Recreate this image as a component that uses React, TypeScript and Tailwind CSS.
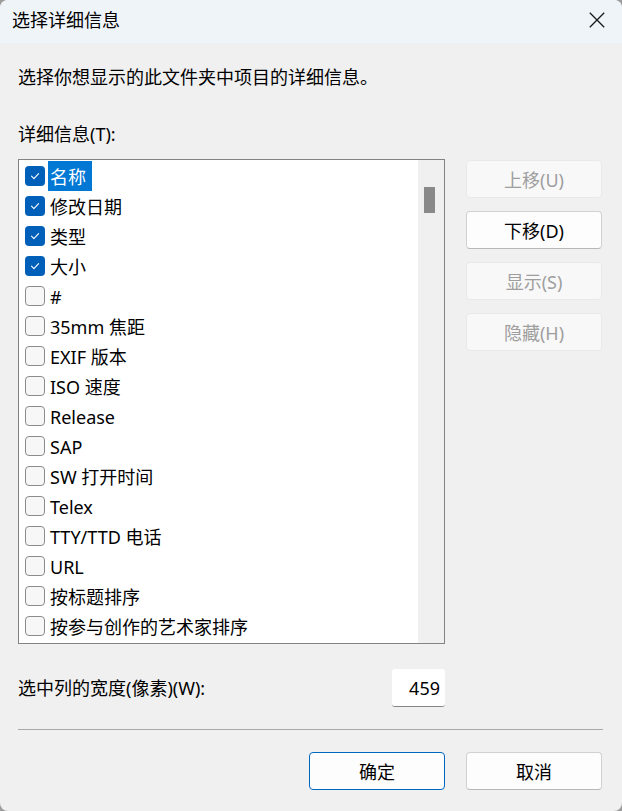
import React from "react";

const items: { label: string; checked: boolean; selected?: boolean }[] = [
  { label: "名称", checked: true, selected: true },
  { label: "修改日期", checked: true },
  { label: "类型", checked: true },
  { label: "大小", checked: true },
  { label: "#", checked: false },
  { label: "35mm 焦距", checked: false },
  { label: "EXIF 版本", checked: false },
  { label: "ISO 速度", checked: false },
  { label: "Release", checked: false },
  { label: "SAP", checked: false },
  { label: "SW 打开时间", checked: false },
  { label: "Telex", checked: false },
  { label: "TTY/TTD 电话", checked: false },
  { label: "URL", checked: false },
  { label: "按标题排序", checked: false },
  { label: "按参与创作的艺术家排序", checked: false },
];

function Check({ checked }: { checked: boolean }) {
  if (checked) {
    return (
      <div className="w-[20px] h-[20px] rounded-[4px] bg-[#005fb8] flex items-center justify-center shrink-0">
        <svg width="20" height="20" viewBox="0 0 20 20" fill="none">
          <path d="M6.5 10.2 L8.9 12.6 L13.6 7.6" stroke="#ffffff" strokeWidth="1.1" strokeLinecap="round" strokeLinejoin="round" />
        </svg>
      </div>
    );
  }
  return <div className="w-[20px] h-[20px] rounded-[4px] border border-[#8b8b8b] bg-[#f7f7f7] shrink-0" />;
}

function SideButton({ label, enabled }: { label: string; enabled?: boolean }) {
  return (
    <div
      className={
        enabled
          ? "h-[38px] w-[136px] rounded-[4px] border border-[#d1d1d1] border-b-[#b8b8b8] bg-[#fdfdfd] flex items-center justify-center pt-[2px] text-black"
          : "h-[38px] w-[136px] rounded-[4px] border border-[#e9e9e9] bg-[#f8f8f8] flex items-center justify-center pt-[2px] text-[#9e9e9e]"
      }
    >
      {label}
    </div>
  );
}

export default function App() {
  return (
    <div className="w-[622px] h-[811px] bg-[#9c9c9c]">
      <div
        className="w-full h-full rounded-[8px] overflow-hidden bg-[#f0f0f0] flex flex-col text-[18px] leading-[24px] text-black"
        style={{ fontFamily: '"Noto Sans", "Noto Sans CJK SC", sans-serif' }}
      >
        {/* Title bar */}
        <div className="h-[43px] bg-[#eff4f9] flex items-center justify-between pl-[12px] pr-[17px] pb-[3px] shrink-0">
          <span className="text-black">选择详细信息</span>
          <svg width="16" height="16" viewBox="0 0 16 16" fill="none">
            <path d="M0.8 0.8 L15.2 15.2 M15.2 0.8 L0.8 15.2" stroke="#1a1a1a" strokeWidth="1.3" />
          </svg>
        </div>

        <div className="px-[18px] flex flex-col">
          <div className="mt-[22px]">选择你想显示的此文件夹中项目的详细信息。</div>
          <div className="mt-[33px]">详细信息(T):</div>

          <div className="mt-[13px] flex gap-[21px]">
            {/* List */}
            <div className="w-[427px] h-[485px] border border-[#838383] bg-white flex">
              <div className="flex-1 pt-[1px] flex flex-col">
                {items.map((it) => (
                  <div key={it.label} className="h-[30px] flex items-center pl-[6px]">
                    <Check checked={it.checked} />
                    {it.selected ? (
                      <span className="ml-[3px] h-[30px] flex items-center pl-[2px] pr-[6px] pt-[1px] bg-[#0078d4] text-white">
                        {it.label}
                      </span>
                    ) : (
                      <span className="ml-[5px] pt-[1px] text-black">{it.label}</span>
                    )}
                  </div>
                ))}
              </div>
              <div className="w-[26px] bg-[#f0f0f0] pt-[27px] pl-[6px]">
                <div className="w-[11px] h-[26px] bg-[#898989]" />
              </div>
            </div>

            {/* Side buttons */}
            <div className="flex flex-col gap-[13px] pt-[1px]">
              <SideButton label="上移(U)" />
              <SideButton label="下移(D)" enabled />
              <SideButton label="显示(S)" />
              <SideButton label="隐藏(H)" />
            </div>
          </div>

          {/* Width row */}
          <div className="mt-[25px] w-[427px] h-[38px] flex items-center justify-between">
            <span>选中列的宽度(像素)(W):</span>
            <div className="w-[53px] h-[38px] bg-white border-b border-[#868686] rounded-[3px] flex items-center justify-end pr-[5px]">
              459
            </div>
          </div>

          <div className="mt-[22px] h-[1px] bg-[#a9a9a9] mr-[1px]" />

          <div className="mt-[22px] flex justify-end gap-[21px] pr-[2px]">
            <div className="h-[38px] w-[136px] rounded-[4px] border border-[#0067c0] bg-[#fdfdfd] flex items-center justify-center pt-[2px]">
              确定
            </div>
            <div className="h-[38px] w-[136px] rounded-[4px] border border-[#d1d1d1] border-b-[#b8b8b8] bg-[#fdfdfd] flex items-center justify-center pt-[2px]">
              取消
            </div>
          </div>
        </div>
      </div>
    </div>
  );
}
